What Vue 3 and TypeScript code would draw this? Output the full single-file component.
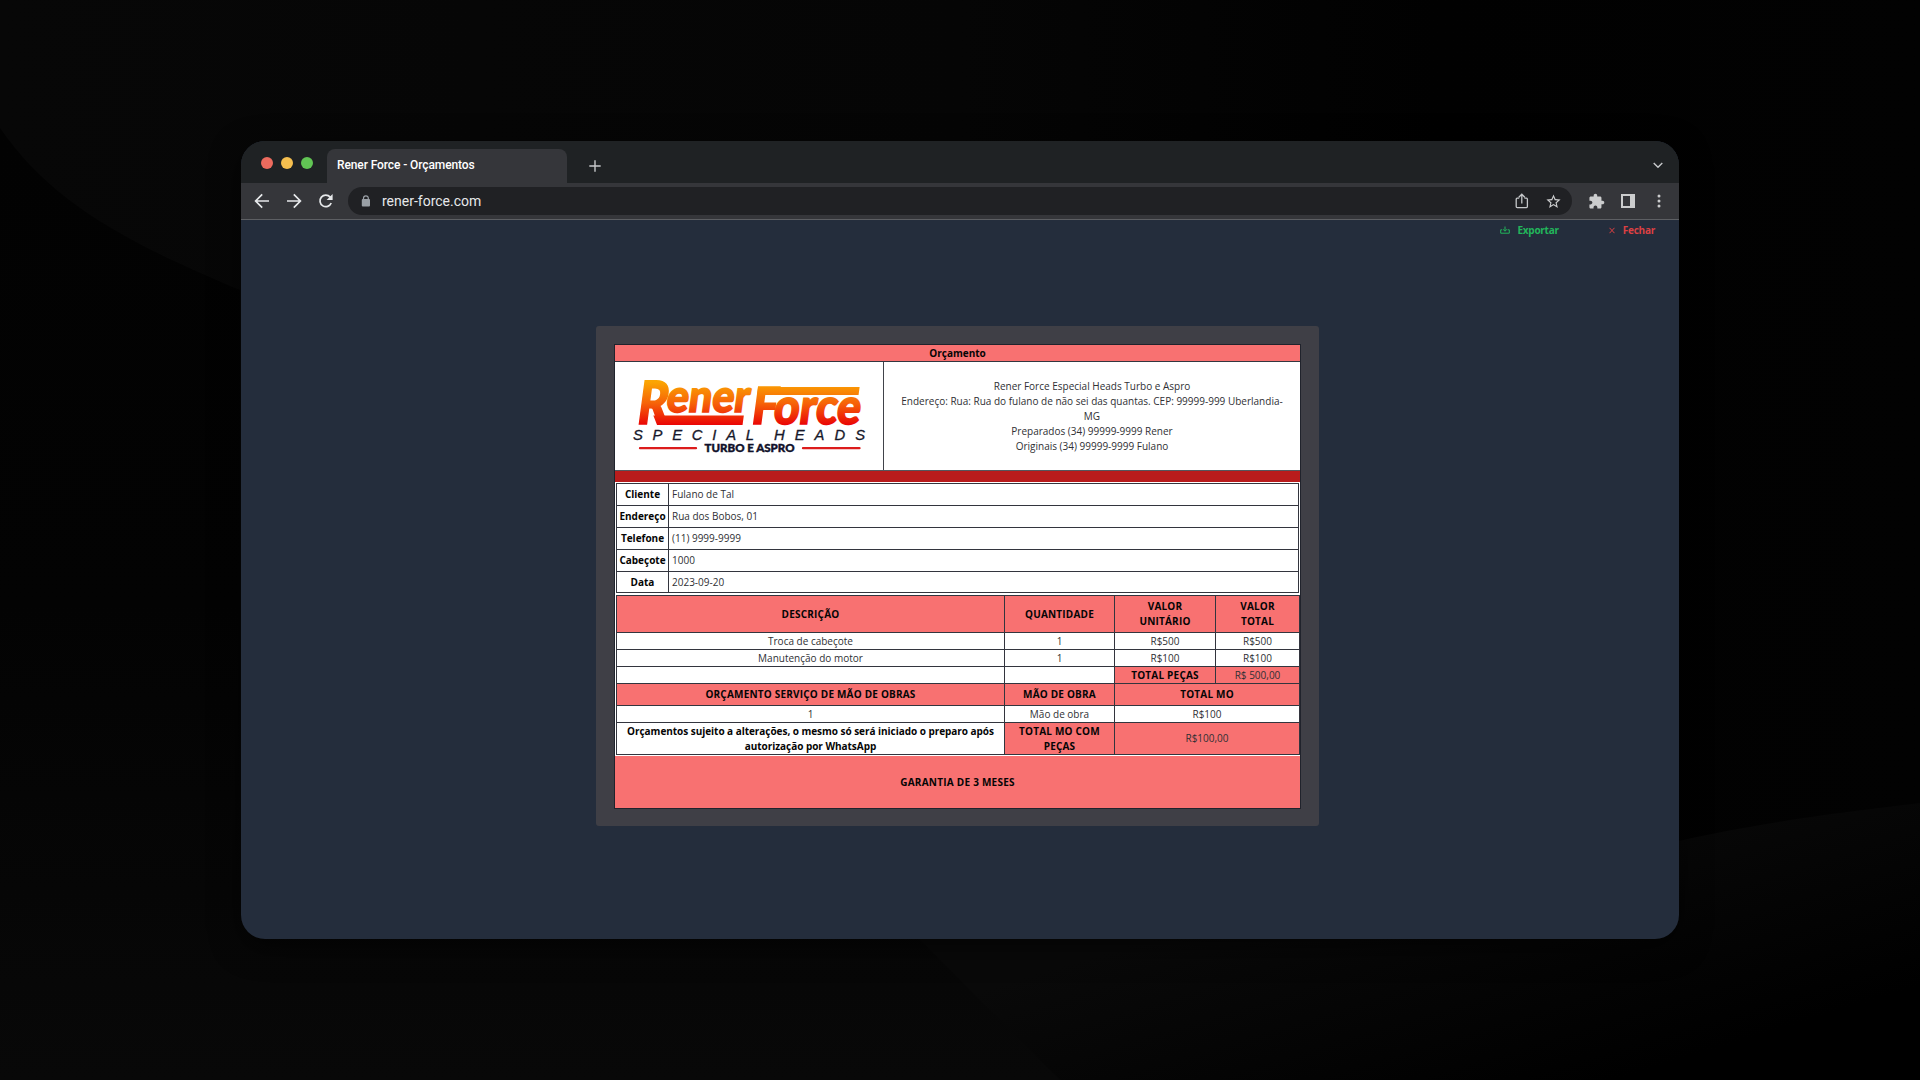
<script setup lang="ts">
interface Field {
  label: string
  value: string
}

const contact: string[] = [
  'Rener Force Especial Heads Turbo e Aspro',
  'Endereço: Rua: Rua do fulano de não sei das quantas. CEP: 99999-999 Uberlandia-',
  'MG',
  'Preparados (34) 99999-9999 Rener',
  'Originais (34) 99999-9999 Fulano',
]

const fields: Field[] = [
  { label: 'Cliente', value: 'Fulano de Tal' },
  { label: 'Endereço', value: 'Rua dos Bobos, 01' },
  { label: 'Telefone', value: '(11) 9999-9999' },
  { label: 'Cabeçote', value: '1000' },
  { label: 'Data', value: '2023-09-20' },
]
</script>

<template>
  <main class="desktop">
    <svg class="backdrop" viewBox="0 0 1920 1080" aria-hidden="true">
      <defs>
        <linearGradient id="bg" x1="0" y1="0" x2="1" y2="0">
          <stop offset="0" stop-color="#070707" />
          <stop offset="0.5" stop-color="#050505" />
          <stop offset="0.75" stop-color="#010101" />
          <stop offset="1" stop-color="#020202" />
        </linearGradient>
        <linearGradient id="left" x1="0" y1="0" x2="0" y2="1">
          <stop offset="0" stop-color="#020202" />
          <stop offset="0.5" stop-color="#030303" />
          <stop offset="1" stop-color="#080808" />
        </linearGradient>
        <linearGradient id="right" gradientUnits="userSpaceOnUse" x1="1600" y1="800" x2="1680" y2="1060">
          <stop offset="0" stop-color="#090909" />
          <stop offset="1" stop-color="#000" />
        </linearGradient>
      </defs>
      <rect width="1920" height="1080" fill="url(#bg)" />
      <path d="M0 128C50 200 120 240 240 290V900H1060V1080H0Z" fill="url(#left)" />
      <path d="M900 920L1060 1080H1920V803C1820 815 1740 825 1640 850Z" fill="url(#right)" />
    </svg>

    <section class="window">
      <header class="tabs">
        <div class="lights">
          <i class="red"></i><i class="yellow"></i><i class="green"></i>
        </div>
        <div class="tab">Rener Force - Orçamentos</div>
        <svg class="plus" width="12" height="12" viewBox="0 0 12 12"><path d="M6 .3V11.7M.3 6H11.7" /></svg>
        <svg class="chevron" width="10" height="7" viewBox="0 0 10 7"><path d="M.7 1L5 5.3L9.3 1" /></svg>
      </header>

      <nav class="toolbar">
        <svg class="nav" width="16" height="16" viewBox="0 0 16 16"><path d="M15 8H2M8.2 1.4L1.6 8L8.2 14.6" /></svg>
        <svg class="nav" width="16" height="16" viewBox="0 0 16 16"><path d="M1 8H14M7.8 1.4L14.4 8L7.8 14.6" /></svg>
        <svg class="nav reload" width="16" height="16" viewBox="0 0 16 16">
          <path d="M13.2 10A5.8 5.8 0 1 1 12.2 4.1L13.5 5.5" /><path class="solid" d="M14.6 1V7H8.6Z" />
        </svg>
        <div class="address">
          <svg class="lock" width="10" height="12" viewBox="0 0 10 12">
            <path d="M2.5 5V3.2A2.4 2.4 0 0 1 7.3 3.2V5" fill="none" stroke="#9aa0a6" stroke-width="1.2" />
            <rect x=".8" y="4" width="8.2" height="7.4" rx="1" fill="#9aa0a6" />
          </svg>
          <span class="url">rener-force.com</span>
          <svg class="share" width="14" height="16" viewBox="0 0 14 16">
            <path d="M4.2 5.2H2.2Q1.2 5.2 1.2 6.2V13.6Q1.2 14.6 2.2 14.6H11.4Q12.4 14.6 12.4 13.6V6.2Q12.4 5.2 11.4 5.2H9.4M6.8 10.4V1.5M3.8 4.2L6.8 1.2L9.8 4.2" />
          </svg>
          <svg class="star" width="17" height="17" viewBox="0 0 24 24">
            <path d="M22 9.24l-7.19-.62L12 2 9.19 8.63 2 9.24l5.46 4.73L5.82 21 12 17.27 18.18 21l-1.63-7.03L22 9.24zM12 15.4l-3.76 2.27 1-4.28-3.32-2.88 4.38-.38L12 6.1l1.71 4.04 4.38.38-3.32 2.88 1 4.28L12 15.4z" />
          </svg>
        </div>
        <svg class="puzzle" width="17" height="17" viewBox="0 0 24 24">
          <path d="M20.5 11H19V7c0-1.1-.9-2-2-2h-4V3.5C13 2.12 11.88 1 10.5 1S8 2.12 8 3.5V5H4c-1.1 0-1.99.9-1.99 2v3.8H3.5c1.49 0 2.7 1.21 2.7 2.7s-1.21 2.7-2.7 2.7H2V20c0 1.1.9 2 2 2h3.8v-1.5c0-1.49 1.21-2.7 2.7-2.7 1.49 0 2.7 1.21 2.7 2.7V22H17c1.1 0 2-.9 2-2v-4h1.5c1.38 0 2.5-1.12 2.5-2.5S21.88 11 20.5 11z" />
        </svg>
        <svg class="panel" width="14" height="14" viewBox="0 0 14 14"><path fill-rule="evenodd" d="M0 0H14V14H0ZM2 2V12H9V2Z" /></svg>
        <svg class="dots" width="4" height="14" viewBox="0 0 4 14"><circle cx="2" cy="2" r="1.5" /><circle cx="2" cy="7" r="1.5" /><circle cx="2" cy="12" r="1.5" /></svg>
      </nav>

      <div class="page">
        <div class="actions">
          <button class="action export" type="button">
            <svg width="10" height="9" viewBox="0 0 10 9"><path d="M.7 3.8V7.2H9.3V3.8H7.6M.7 3.8H2.2M5 .5V5M3.1 3.4L5 5.2L6.9 3.4" /></svg>
            <span>Exportar</span>
          </button>
          <button class="action close" type="button">
            <svg width="6" height="7" viewBox="0 0 6 7"><path d="M.5 .8L5.5 6.2M5.5 .8L.5 6.2" /></svg>
            <span>Fechar</span>
          </button>
        </div>

        <article class="card">
          <div class="sheet">
            <h1 class="title">Orçamento</h1>
            <div class="brand">
              <div class="logo">
                <svg width="260" height="95" viewBox="0 0 260 95">
                  <defs>
                    <linearGradient id="fire" gradientUnits="userSpaceOnUse" x1="0" y1="12" x2="0" y2="55">
                      <stop offset="0" stop-color="#fba502" />
                      <stop offset="0.5" stop-color="#f66208" />
                      <stop offset="1" stop-color="#ea0505" />
                    </linearGradient>
                  </defs>
                  <g fill="url(#fire)" stroke="url(#fire)" class="wordmark" transform="translate(7.4 0) skewX(-7.6)">
                    <text x="15.500" y="54.2" font-size="59.500" textLength="31" lengthAdjust="spacingAndGlyphs">R</text>
                    <text x="43.500" y="42.3" font-size="45" textLength="83" lengthAdjust="spacingAndGlyphs">ener</text>
                    <text x="130" y="54.2" font-size="51" textLength="26" lengthAdjust="spacingAndGlyphs">F</text>
                    <text x="152" y="54" font-size="50" textLength="87" lengthAdjust="spacingAndGlyphs">orce</text>
                    <path stroke="none" d="M32 45.500H122.5V55H37ZM133 17H234.500V25H133Z" />
                  </g>
                  <text class="special" x="13" y="69.8" font-size="14.8" textLength="121">SPECIAL</text>
                  <text class="special" x="154" y="69.8" font-size="14.8" textLength="91">HEADS</text>
                  <path d="M20 78.2H76M183 78.2H239.500" stroke="#dc1c1c" stroke-width="2.3" stroke-linecap="round" />
                  <text class="turbo" x="84.500" y="82" font-size="10.8" textLength="90" lengthAdjust="spacingAndGlyphs">TURBO E ASPRO</text>
                </svg>
              </div>
              <div class="contact">
                <p v-for="line in contact" :key="line">{{ line }}</p>
              </div>
            </div>
            <div class="stripe"></div>

            <table class="grid client">
              <colgroup><col class="c-label" /><col /></colgroup>
              <tbody>
                <tr v-for="field in fields" :key="field.label">
                  <th>{{ field.label }}</th>
                  <td>{{ field.value }}</td>
                </tr>
              </tbody>
            </table>

            <table class="grid items">
              <colgroup><col class="c-desc" /><col class="c-qty" /><col class="c-unit" /><col class="c-total" /></colgroup>
              <tbody>
                <tr class="h37 pink"><th>DESCRIÇÃO</th><th>QUANTIDADE</th><th>VALOR<br />UNITÁRIO</th><th>VALOR<br />TOTAL</th></tr>
                <tr class="h17"><td>Troca de cabeçote</td><td>1</td><td>R$500</td><td>R$500</td></tr>
                <tr class="h17"><td>Manutenção do motor</td><td>1</td><td>R$100</td><td>R$100</td></tr>
                <tr class="h17"><td></td><td></td><th class="pink">TOTAL PEÇAS</th><td class="pink">R$ 500,00</td></tr>
                <tr class="h22 pink"><th>ORÇAMENTO SERVIÇO DE MÃO DE OBRAS</th><th>MÃO DE OBRA</th><th colspan="2">TOTAL MO</th></tr>
                <tr class="h17"><td>1</td><td>Mão de obra</td><td colspan="2">R$100</td></tr>
                <tr class="h32"><th class="note">Orçamentos sujeito a alterações, o mesmo só será iniciado o preparo após<br />autorização por WhatsApp</th><th class="pink">TOTAL MO COM<br />PEÇAS</th><td class="pink" colspan="2">R$100,00</td></tr>
              </tbody>
            </table>
            <footer class="warranty">GARANTIA DE 3 MESES</footer>
          </div>
        </article>
      </div>
    </section>
  </main>
</template>

<style>
body {
  margin: 0;
  background: #050505;
}
</style>

<style scoped>
* {
  box-sizing: border-box;
}
.desktop {
  position: relative;
  display: flex;
  width: 1920px;
  height: 1080px;
  overflow: hidden;
  padding: 141px 241px;
  font-family: "Open Sans", "Noto Sans", sans-serif;
}
.backdrop {
  position: absolute;
  inset: 0;
  width: 1920px;
  height: 1080px;
}
.window {
  position: relative;
  display: flex;
  flex-direction: column;
  width: 1438px;
  height: 798px;
  border-radius: 24px;
  overflow: hidden;
  background: #242d3c;
  box-shadow: 0 8px 30px rgba(0, 0, 0, 0.6);
}
.tabs {
  display: flex;
  height: 42px;
  background: #1f2224;
}
.lights {
  display: flex;
  gap: 8px;
  padding: 16px 0 0 20px;
  width: 86px;
}
.lights i {
  width: 12px;
  height: 12px;
  border-radius: 50%;
}
.red { background: #ed6b5e; }
.yellow { background: #f5bf4f; }
.green { background: #61c554; }
.tab {
  width: 240px;
  height: 34px;
  margin-top: 8px;
  padding-left: 10px;
  border-radius: 8px 8px 0 0;
  background: #35363a;
  color: #fff;
  font: 500 12px/32px Roboto, sans-serif;
  letter-spacing: -0.1px;
}
.tabs svg {
  fill: none;
  stroke: #c6c8ca;
  stroke-width: 1.4;
}
.plus { margin: 19px 0 0 22px; }
.chevron { margin: 21px 16px 0 auto; }
.toolbar {
  display: flex;
  align-items: center;
  height: 37px;
  padding: 0 18px 0 13px;
  border-bottom: 1px solid #5d5f63;
  background: #35363a;
}
.nav {
  margin-right: 16px;
  fill: none;
  stroke: #e6e8ea;
  stroke-width: 1.7;
}
.nav .solid {
  fill: #e6e8ea;
  stroke: none;
}
.reload { margin-right: 14px; }
.address {
  display: flex;
  align-items: center;
  width: 1224px;
  height: 28px;
  padding: 0 10px 0 13px;
  border-radius: 14px;
  background: #202124;
}
.url {
  margin: 0 auto 0 11px;
  color: #e6e8ea;
  font: 400 14px/28px Roboto, sans-serif;
}
.share {
  margin-right: 16px;
  fill: none;
  stroke: #c5c7c9;
  stroke-width: 1.3;
}
.star, .puzzle, .panel, .dots { fill: #cbcccd; }
.puzzle { margin-left: 15.6px; }
.panel { margin-left: 16.4px; }
.dots { margin-left: auto; }
.page {
  display: flex;
  flex-direction: column;
  flex: 1;
}
.actions {
  display: flex;
  justify-content: flex-end;
  height: 20px;
  padding-right: 24px;
  gap: 50px;
}
.action {
  display: flex;
  align-items: center;
  gap: 7px;
  padding: 0;
  border: 0;
  background: none;
  font: 700 10px/20px "Open Sans", sans-serif;
  letter-spacing: -0.25px;
}
.action svg {
  fill: none;
  stroke: currentColor;
  stroke-width: 1;
}
.export { color: #22b65b; }
.close {
  gap: 8px;
  color: #dc4043;
}
.card {
  display: flex;
  width: 722.5px;
  height: 500px;
  margin: 86px 0 0 355px;
  padding: 18px;
  border-radius: 3px;
  background: #3f3f46;
}
.sheet {
  display: flex;
  flex: none;
  flex-direction: column;
  width: 687px;
  height: 464.5px;
  border: 1px solid #20232c;
  background: #fff;
  color: #050505;
  font-size: 10px;
}
.title {
  flex: none;
  height: 17px;
  margin: 0;
  border-bottom: 1px solid #343640;
  background: #f87171;
  font-size: 10px;
  font-weight: 700;
  line-height: 17px;
  text-align: center;
}
.brand {
  display: flex;
  flex: none;
  height: 109px;
  border-bottom: 1px solid #55565c;
}
.logo {
  width: 269px;
  padding: 8px 0 0 5px;
  border-right: 1px solid #41434a;
}
.logo svg {
  display: block;
  overflow: visible;
}
.wordmark {
  font-family: Lato, sans-serif;
  font-weight: 900;
  stroke-width: 1.7;
}
.special {
  fill: #17182a;
  stroke: #17182a;
  stroke-width: 0.3;
  font-family: "Liberation Sans", sans-serif;
  font-style: italic;
}
.turbo {
  fill: #10112a;
  stroke: #10112a;
  stroke-width: 0.4;
  font-family: Lato, sans-serif;
  font-weight: 900;
}
.contact {
  display: flex;
  flex: 1;
  flex-direction: column;
  justify-content: center;
  padding-top: 1px;
  color: #2f3034;
  text-align: center;
}
.contact p {
  margin: 0;
  line-height: 15.1px;
}
.stripe {
  flex: none;
  height: 11px;
  background: #b91c1c;
}
.grid {
  flex: none;
  width: 683px;
  margin: 1px 0 0 1px;
  border-collapse: collapse;
  table-layout: fixed;
  line-height: 15px;
  text-align: center;
}
.grid th, .grid td {
  padding: 0;
  border: 1px solid #33353e;
}
.grid td { color: #2f3034; }
.grid tr.pink > *, .grid .pink { background: #f87171; }
.client tr { height: 22px; }
.client tr:last-child { height: 21px; }
.client td {
  padding-left: 3px;
  text-align: left;
}
.c-label { width: 52px; }
.items { margin-top: 2px; }
.items th { letter-spacing: 0.2px; }
.items .note { letter-spacing: -0.04px; }
.c-desc { width: 388px; }
.c-qty { width: 110px; }
.c-unit { width: 101px; }
.c-total { width: 84px; }
.h37 { height: 37px; }
.h17 { height: 17px; line-height: 14px; }
.h22 { height: 22px; }
.h32 { height: 32px; }
.warranty {
  flex: 1;
  margin-top: 1px;
  background: #f87171;
  font-weight: 700;
  letter-spacing: 0.25px;
  line-height: 52px;
  text-align: center;
}
</style>
